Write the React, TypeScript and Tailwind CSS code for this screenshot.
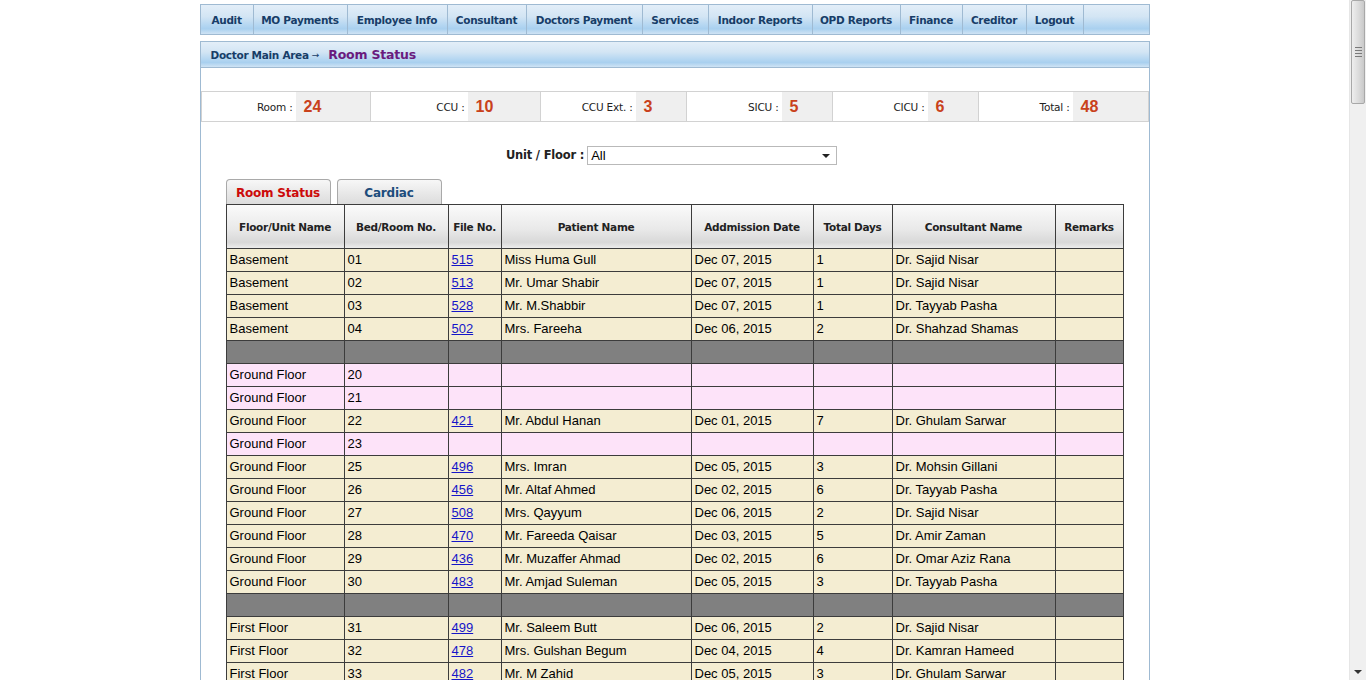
import React from 'react';

// Menu items with the widths they take in the top bar
const menu = [
    { label: 'Audit', w: 'w-[53px]' },
    { label: 'MO Payments', w: 'w-[94px]' },
    { label: 'Employee Info', w: 'w-[100px]' },
    { label: 'Consultant', w: 'w-[79px]' },
    { label: 'Doctors Payment', w: 'w-[116px]' },
    { label: 'Services', w: 'w-[66px]' },
    { label: 'Indoor Reports', w: 'w-[104px]' },
    { label: 'OPD Reports', w: 'w-[88px]' },
    { label: 'Finance', w: 'w-[62px]' },
    { label: 'Creditor', w: 'w-[64px]' },
    { label: 'Logout', w: 'w-[57px]' },
];

const stats = [
    { label: 'Room :', value: '24', lw: 'w-[94px]', vw: 'w-[75px]' },
    { label: 'CCU :', value: '10', lw: 'w-[97px]', vw: 'w-[73px]' },
    { label: 'CCU Ext. :', value: '3', lw: 'w-[95px]', vw: 'w-[51px]' },
    { label: 'SICU :', value: '5', lw: 'w-[95px]', vw: 'w-[51px]' },
    { label: 'CICU :', value: '6', lw: 'w-[95px]', vw: 'w-[51px]' },
    { label: 'Total :', value: '48', lw: 'w-[94px]', vw: 'flex-1' },
];

const columns = [
    { title: 'Floor/Unit Name', w: 'w-[118px]' },
    { title: 'Bed/Room No.', w: 'w-[104px]' },
    { title: 'File No.', w: 'w-[53px]' },
    { title: 'Patient Name', w: 'w-[190px]' },
    { title: 'Addmission Date', w: 'w-[122px]' },
    { title: 'Total Days', w: 'w-[79px]' },
    { title: 'Consultant Name', w: 'w-[163px]' },
    { title: 'Remarks', w: 'w-[68px]' },
];

type Row =
    | { kind: 'sep' }
    | { kind: 'room'; floor: string; bed: string; file?: string; patient?: string; date?: string; days?: string; doctor?: string };

const rows: Row[] = [
    { kind: 'room', floor: 'Basement', bed: '01', file: '515', patient: 'Miss Huma Gull', date: 'Dec 07, 2015', days: '1', doctor: 'Dr. Sajid Nisar' },
    { kind: 'room', floor: 'Basement', bed: '02', file: '513', patient: 'Mr. Umar Shabir', date: 'Dec 07, 2015', days: '1', doctor: 'Dr. Sajid Nisar' },
    { kind: 'room', floor: 'Basement', bed: '03', file: '528', patient: 'Mr. M.Shabbir', date: 'Dec 07, 2015', days: '1', doctor: 'Dr. Tayyab Pasha' },
    { kind: 'room', floor: 'Basement', bed: '04', file: '502', patient: 'Mrs. Fareeha', date: 'Dec 06, 2015', days: '2', doctor: 'Dr. Shahzad Shamas' },
    { kind: 'sep' },
    { kind: 'room', floor: 'Ground Floor', bed: '20' },
    { kind: 'room', floor: 'Ground Floor', bed: '21' },
    { kind: 'room', floor: 'Ground Floor', bed: '22', file: '421', patient: 'Mr. Abdul Hanan', date: 'Dec 01, 2015', days: '7', doctor: 'Dr. Ghulam Sarwar' },
    { kind: 'room', floor: 'Ground Floor', bed: '23' },
    { kind: 'room', floor: 'Ground Floor', bed: '25', file: '496', patient: 'Mrs. Imran', date: 'Dec 05, 2015', days: '3', doctor: 'Dr. Mohsin Gillani' },
    { kind: 'room', floor: 'Ground Floor', bed: '26', file: '456', patient: 'Mr. Altaf Ahmed', date: 'Dec 02, 2015', days: '6', doctor: 'Dr. Tayyab Pasha' },
    { kind: 'room', floor: 'Ground Floor', bed: '27', file: '508', patient: 'Mrs. Qayyum', date: 'Dec 06, 2015', days: '2', doctor: 'Dr. Sajid Nisar' },
    { kind: 'room', floor: 'Ground Floor', bed: '28', file: '470', patient: 'Mr. Fareeda Qaisar', date: 'Dec 03, 2015', days: '5', doctor: 'Dr. Amir Zaman' },
    { kind: 'room', floor: 'Ground Floor', bed: '29', file: '436', patient: 'Mr. Muzaffer Ahmad', date: 'Dec 02, 2015', days: '6', doctor: 'Dr. Omar Aziz Rana' },
    { kind: 'room', floor: 'Ground Floor', bed: '30', file: '483', patient: 'Mr. Amjad Suleman', date: 'Dec 05, 2015', days: '3', doctor: 'Dr. Tayyab Pasha' },
    { kind: 'sep' },
    { kind: 'room', floor: 'First Floor', bed: '31', file: '499', patient: 'Mr. Saleem Butt', date: 'Dec 06, 2015', days: '2', doctor: 'Dr. Sajid Nisar' },
    { kind: 'room', floor: 'First Floor', bed: '32', file: '478', patient: 'Mrs. Gulshan Begum', date: 'Dec 04, 2015', days: '4', doctor: 'Dr. Kamran Hameed' },
    { kind: 'room', floor: 'First Floor', bed: '33', file: '482', patient: 'Mr. M Zahid', date: 'Dec 05, 2015', days: '3', doctor: 'Dr. Ghulam Sarwar' },
];

const glossy =
    'bg-[linear-gradient(180deg,#e3eef8_0%,#d3e5f4_40%,#b4d6f1_70%,#a9d0ef_82%,#cfe3f4_100%)]';

const Scrollbar = () => (
    <div className="flex w-[17px] shrink-0 flex-col bg-[#f0f0f0] border-l border-[#e6e6e6]">
        <div className="mx-[1px] flex h-[104px] items-center justify-center rounded-[2px] border border-[#a8a8a8] bg-[linear-gradient(90deg,#eeeeee,#d9d9d9_60%,#c9c9c9)]">
            <div className="flex flex-col gap-[2px]">
                <div className="h-px w-[7px] bg-[#7a7a7a]" />
                <div className="h-px w-[7px] bg-[#7a7a7a]" />
                <div className="h-px w-[7px] bg-[#7a7a7a]" />
                <div className="h-px w-[7px] bg-[#7a7a7a]" />
            </div>
        </div>
        <div className="flex-1" />
        <div className="flex h-[17px] items-center justify-center">
            <div className="h-0 w-0 border-x-[4px] border-t-[4px] border-x-transparent border-t-[#333]" />
        </div>
    </div>
);

const App = () => {
    return (
        <div className="flex h-[680px] overflow-hidden bg-white">
            <div className="min-w-0 flex-1 overflow-hidden">
                <div className="mx-auto w-[950px] pt-[4px] font-['DejaVu_Sans',Verdana,sans-serif]">
                    {/* Top menu */}
                    <div className={`flex h-[31px] border border-[#9fbad2] ${glossy}`}>
                        {menu.map((m) => (
                            <div
                                key={m.label}
                                className={`${m.w} flex items-center justify-center border-r border-[#9fbad2] pt-[2px] text-[10.5px] font-bold tracking-[-0.3px] text-[#173d68]`}
                            >
                                {m.label}
                            </div>
                        ))}
                    </div>

                    {/* Breadcrumb */}
                    <div className={`mt-[6px] flex h-[27px] items-center border border-[#9fbad2] pl-[10px] pt-[2px] ${glossy}`}>
                        <span className="text-[10.5px] font-bold tracking-[-0.3px] text-[#173d68]">Doctor Main Area</span>
                        <span className="ml-[3px] text-[9px] text-[#173d68]">→</span>
                        <span className="ml-[9px] text-[12.5px] font-bold tracking-[-0.2px] text-[#6a1b7e]">Room Status</span>
                    </div>

                    {/* Main panel */}
                    <div className="border-x border-[#9fbad2] pt-[23px] pb-4">
                        {/* Bed counts */}
                        <div className="flex h-[31px] border border-[#d2d2d2]">
                            {stats.map((s) => (
                                <React.Fragment key={s.label}>
                                    <div className={`${s.lw} flex items-center justify-end pr-[3px] pt-[2px] text-[10.5px] tracking-[-0.2px] text-[#222]`}>
                                        {s.label}
                                    </div>
                                    <div className={`${s.vw} flex items-center border-r border-[#d2d2d2] bg-[#efefef] pl-[8px] font-['Liberation_Sans',Arial,sans-serif] text-[16px] font-bold text-[#c9411b] last:border-r-0`}>
                                        {s.value}
                                    </div>
                                </React.Fragment>
                            ))}
                        </div>

                        {/* Unit / Floor filter */}
                        <div className="mt-[24px] flex items-center justify-center pr-[6px]">
                            <span className="mr-[3px] text-[11.5px] font-bold tracking-[-0.2px] text-[#222]">Unit / Floor :</span>
                            <div className="flex h-[19px] w-[250px] items-center justify-between border border-[#b9b9b9] bg-white pl-[3px] pr-[6px] font-['Liberation_Sans',Arial,sans-serif] text-[13px] text-black">
                                <span>All</span>
                                <div className="h-0 w-0 border-x-[4px] border-t-[4px] border-x-transparent border-t-[#222]" />
                            </div>
                        </div>

                        {/* Tabs + table */}
                        <div className="mx-[25px] mt-[14px]">
                            <div className="flex h-[25px] items-end gap-[6px]">
                                <div className="flex h-[25px] w-[105px] items-center justify-center rounded-t-[4px] border border-b-0 border-[#a9a9a9] bg-[linear-gradient(#f7f7f7,#dcdcdc)] pt-[1px] text-[12px] font-bold tracking-[-0.2px] text-[#cc0a0a]">
                                    Room Status
                                </div>
                                <div className="flex h-[25px] w-[105px] items-center justify-center rounded-t-[4px] border border-b-0 border-[#a9a9a9] bg-[linear-gradient(#f7f7f7,#dcdcdc)] pt-[1px] text-[12px] font-bold tracking-[-0.2px] text-[#1c4c7c]">
                                    Cardiac
                                </div>
                            </div>
                            <table className="w-[898px] table-fixed border-collapse border border-[#3c3c3c]">
                                <thead>
                                    <tr className="h-[44px] bg-[linear-gradient(180deg,#fafafa_0%,#e9e9e9_55%,#d8d8d8_85%,#f0f0f0_100%)]">
                                        {columns.map((c) => (
                                            <th
                                                key={c.title}
                                                className={`${c.w} border border-[#3c3c3c] p-0 pt-[2px] text-center text-[10.5px] font-bold tracking-[-0.3px] text-[#222]`}
                                            >
                                                {c.title}
                                            </th>
                                        ))}
                                    </tr>
                                </thead>
                                <tbody className="font-['Liberation_Sans',Arial,sans-serif] text-[13px] text-black">
                                    {rows.map((r, i) => {
                                        if (r.kind === 'sep') {
                                            return (
                                                <tr key={i} className="h-[23px] bg-[#808080]">
                                                    {columns.map((c) => (
                                                        <td key={c.title} className="border border-[#3c3c3c]" />
                                                    ))}
                                                </tr>
                                            );
                                        }
                                        const bg = r.file ? 'bg-[#f4edd2]' : 'bg-[#fde3f9]';
                                        const cells = [r.floor, r.bed, r.file, r.patient, r.date, r.days, r.doctor, ''];
                                        return (
                                            <tr key={i} className={`h-[23px] ${bg}`}>
                                                {cells.map((v, j) => (
                                                    <td key={j} className="truncate border border-[#3c3c3c] px-[3px] py-0 leading-[22px]">
                                                        {j === 2 && v ? (
                                                            <a href="#" className="text-[#1515c8] underline">
                                                                {v}
                                                            </a>
                                                        ) : (
                                                            v
                                                        )}
                                                    </td>
                                                ))}
                                            </tr>
                                        );
                                    })}
                                </tbody>
                            </table>
                        </div>
                    </div>
                </div>
            </div>
            <Scrollbar />
        </div>
    );
};

export default App;
